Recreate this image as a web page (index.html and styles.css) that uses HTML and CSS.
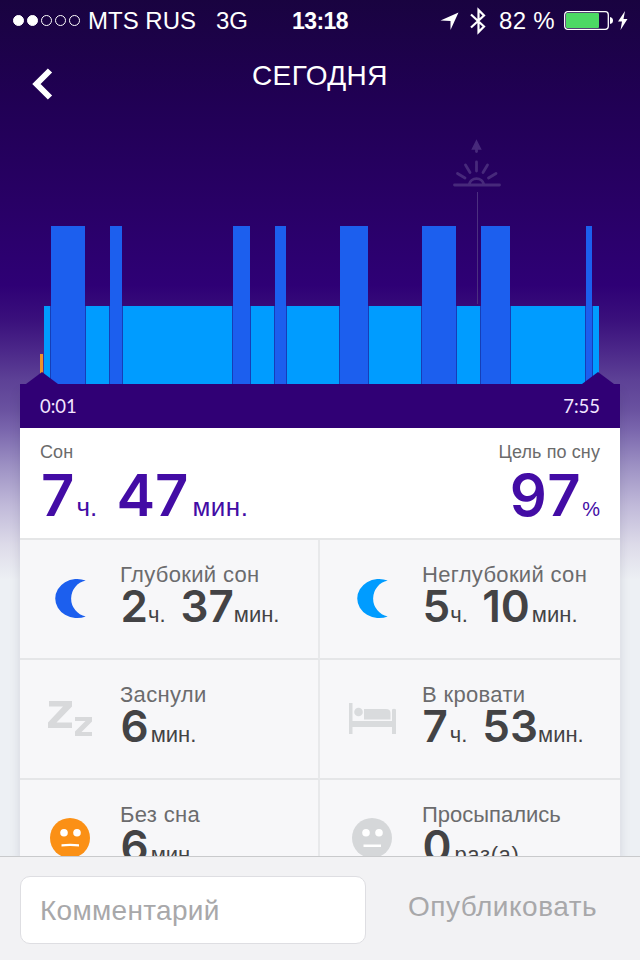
FILE: index.html
```html
<!DOCTYPE html>
<html lang="ru">
<head>
<meta charset="utf-8">
<title>Сегодня</title>
<link rel="stylesheet" href="styles.css">
</head>
<body>
<div class="app">
  <div class="status">
    <div class="signal"><i class="on"></i><i class="on"></i><i></i><i></i><i></i></div>
    <span class="carrier">MTS RUS</span>
    <span class="network">3G</span>
    <span class="clock">13:18</span>
    <svg class="location" width="19" height="19" viewBox="0 0 19 19"><path d="M18.5 0.5L10.5 18V9L0.5 8.5Z" fill="#fff"/></svg>
    <svg class="bluetooth" width="16" height="28" viewBox="0 0 16 28"><path d="M1 7.5L14 19.5L8.500 25V3L14 8.5L1 20.5" fill="none" stroke="#fff" stroke-width="2.200"/></svg>
    <span class="percent">82 %</span>
    <svg class="battery" width="64" height="20" viewBox="0 0 64 20">
      <rect x="0.7" y="0.7" width="43.6" height="17.6" rx="3" fill="none" stroke="#fff" stroke-width="1.3"/>
      <rect x="2" y="2" width="33" height="15" rx="1" fill="#4cd964"/>
      <path d="M46 6Q49 6.500 49 9.500T46 13Z" fill="#fff"/>
      <path d="M61 0L54 10.500H58L56.500 19L63.500 8H59.500Z" fill="#fff"/>
    </svg>
  </div>
  <header class="header">
    <svg class="back" width="24" height="34" viewBox="0 0 24 34"><path d="M20 3.500L6.500 17L20 30.500" fill="none" stroke="#fff" stroke-width="6"/></svg>
    <h1 class="title">СЕГОДНЯ</h1>
  </header>
  <section class="chart">
    <div class="sunrise">
      <svg width="48" height="50" viewBox="0 0 48 50" fill="none" stroke="#47297b" stroke-width="2.800" stroke-linecap="round">
        <path d="M23.500 3L27.500 11H19.500Z" fill="#47297b" stroke-width="1.500"/><path d="M23.500 10V13.500"/>
        <path d="M1.500 47H46.500M16 46.500A7.700 7.500 0 0 1 31 46.500M23.500 24V33M12.500 27L17 34.500M34.500 27L30 34.500M4.500 35.500L12 40M43 35.500L35.500 40"/>
      </svg>
      <div class="sunrise-line"></div>
    </div>
    <div class="bars">
      <i class="bar awake" style="width:3px"></i>
      <i class="bar light first" style="width:6px"></i>
      <i class="bar deep" style="width:34px"></i>
      <i class="bar light" style="width:23px"></i>
      <i class="bar deep" style="width:12px"></i>
      <i class="bar light" style="width:109px"></i>
      <i class="bar deep" style="width:17px"></i>
      <i class="bar light" style="width:23px"></i>
      <i class="bar deep" style="width:11px"></i>
      <i class="bar light" style="width:52px"></i>
      <i class="bar deep" style="width:28px"></i>
      <i class="bar light" style="width:52px"></i>
      <i class="bar deep" style="width:34px"></i>
      <i class="bar light" style="width:23px"></i>
      <i class="bar deep" style="width:29px"></i>
      <i class="bar light" style="width:74px"></i>
      <i class="bar deep" style="width:6px"></i>
      <i class="bar light last" style="width:6px"></i>
    </div>
  </section>
  <main class="card">
    <div class="times">
      <i class="notch start"></i><i class="notch end"></i>
      <span>0:01</span><span>7:55</span>
    </div>
    <section class="summary">
      <div>
        <div class="caption">Сон</div>
        <div class="total"><b class="first-number">7</b><span class="hours">ч.</span><b>47</b><span class="minutes">мин.</span></div>
      </div>
      <div class="goal">
        <div class="caption">Цель по сну</div>
        <div class="total"><b>97</b><span class="pct">%</span></div>
      </div>
    </section>
    <section class="grid">
      <article class="cell">
        <svg class="icon" width="50" height="50" viewBox="0 0 50 50"><path d="M40.700 7.500A22 19.500 0 1 0 40.700 43.500A18.400 18.400 0 0 1 40.700 7.500Z" fill="#1c5fee"/></svg>
        <div><div class="label">Глубокий сон</div><div class="value"><b>2</b><span class="hours">ч.</span><b>37</b><span>мин.</span></div></div>
      </article>
      <article class="cell">
        <svg class="icon" width="50" height="50" viewBox="0 0 50 50"><path d="M40.700 7.500A22 19.500 0 1 0 40.700 43.500A18.400 18.400 0 0 1 40.700 7.500Z" fill="#009cff"/></svg>
        <div><div class="label">Неглубокий сон</div><div class="value"><b>5</b><span class="hours">ч.</span><b class="ten">10</b><span class="gap">мин.</span></div></div>
      </article>
      <article class="cell">
        <svg class="icon" width="50" height="50" viewBox="0 0 50 50" fill="#d8d9db"><path d="M4 8H27V13.500L11.500 29.500H27V35H3V29.500L18 13.500H4ZM30 24H47V28.500L36.500 39H47V43H30V38.500L40.500 28H30Z"/></svg>
        <div><div class="label">Заснули</div><div class="value"><b>6</b><span class="gap">мин.</span></div></div>
      </article>
      <article class="cell">
        <svg class="icon" width="50" height="50" viewBox="0 0 50 50" fill="#d9dbdd"><path d="M2 10H5.500V28H45V16.500Q47 15 49 16.500V41H45V34H5.500V41H2Z"/><circle cx="11.500" cy="19" r="4.300"/><path d="M17 16H39Q43.500 16 43.500 20V26.500H17Z"/></svg>
        <div><div class="label">В кровати</div><div class="value"><b>7</b><span class="hours gap">ч.</span><b>53</b><span>мин.</span></div></div>
      </article>
      <article class="cell">
        <svg class="icon" width="50" height="50" viewBox="0 0 50 50"><circle cx="25" cy="25" r="20" fill="#fb9015"/><g fill="#fff"><circle cx="19" cy="19.800" r="3.800"/><circle cx="32" cy="19.800" r="3.800"/><path d="M16.500 31.300Q25 30.300 34 31.300V33.600Q25 32.600 16.500 33.600Z"/></g></svg>
        <div><div class="label">Без сна</div><div class="value"><b>6</b><span class="gap">мин.</span></div></div>
      </article>
      <article class="cell">
        <svg class="icon" width="50" height="50" viewBox="0 0 50 50"><circle cx="25" cy="25" r="20" fill="#d5d7d9"/><g fill="#fff"><circle cx="19" cy="19.800" r="3.800"/><circle cx="32" cy="19.800" r="3.800"/><path d="M16.500 31.500H34V34H16.500Z"/></g></svg>
        <div><div class="label tight">Просыпались</div><div class="value"><b>0</b><span class="times-unit">раз(а)</span></div></div>
      </article>
    </section>
  </main>
  <footer class="composer">
    <div class="field">Комментарий</div>
    <div class="publish">Опубликовать</div>
  </footer>
</div>
</body>
</html>
```
FILE: styles.css
```css
* { box-sizing: border-box; }
body { margin: 0; font-family: "Liberation Sans", sans-serif; }
h1 { margin: 0; font-weight: 400; }
svg { display: block; flex: none; }
.app {
  width: 640px; height: 960px; overflow: hidden;
  display: flex; flex-direction: column;
  background: linear-gradient(#190340 0, #200053 95px, #280065 200px, #2e0075 285px, #3a107c 320px, #4b2789 350px, #5d4196 380px, #6a52a0 410px, #7a66ad 430px, #9c90c3 465px, #c0b9d9 505px, #dddbe9 545px, #edf0f4 580px);
}
.status { height: 40px; display: flex; align-items: center; color: #fff; font-size: 24px; line-height: 40px; padding: 1px 0 0 13px; flex: none; white-space: nowrap; }
.signal { display: flex; gap: 3px; width: 75px; }
.signal i { width: 11px; height: 11px; border: 1px solid #fff; border-radius: 50%; }
.signal .on { background: #fff; }
.carrier { width: 128px; }
.network { width: 76px; }
.clock { width: 148px; font-weight: 700; font-size: 23px; letter-spacing: -0.6px; }
.location { margin-top: 1px; }
.bluetooth { margin-left: 11px; }
.percent { margin-left: 13px; width: 65px; letter-spacing: 0.3px; }
.header { height: 80px; padding-left: 30px; display: flex; flex: none; }
.back { margin-top: 27px; }
.title { color: #fff; font-size: 28px; line-height: 36px; margin: 18px 0 0 198px; letter-spacing: 0.4px; }
.chart { height: 264px; position: relative; flex: none; padding: 106px 0 0 40px; }
.sunrise { position: absolute; left: 453px; top: 18px; }
.sunrise-line { width: 1px; height: 112px; margin-left: 24px; margin-top: 4px; background: #4c2f80; }
.bars { display: flex; align-items: flex-end; gap: 1px; height: 158px; position: relative; }
.bar { flex: none; }
.awake { height: 30px; background: #ee922d; }
.light { height: 78px; background: #009cff; box-shadow: 1px 0 #163eb8, -1px 0 #163eb8; }
.first { box-shadow: 1px 0 #163eb8; }
.last { box-shadow: -1px 0 #163eb8; }
.deep { height: 158px; background: #1c5fee; }
.card { width: 600px; height: 472px; margin: 0 20px; flex: none; box-shadow: 0 8px 10px rgba(40, 40, 70, .13); }
.times { height: 44px; position: relative; background: #300075; color: #f2e6ff; display: flex; justify-content: space-between; padding: 0 20px; font: 18.5px/44px Lato, sans-serif; }
.notch { position: absolute; top: -12px; width: 32px; height: 12px; background: #300075; clip-path: polygon(50% 0, 100% 100%, 0 100%); }
.start { left: 6px; }
.end { right: 6px; }
.summary { height: 112px; background: #fff; border-bottom: 2px solid #e5e6e7; display: flex; justify-content: space-between; padding: 12px 20px 0; }
.caption { font-size: 18px; line-height: 24px; color: #6b6b6b; letter-spacing: 0.1px; }
.goal { text-align: right; }
.total { display: flex; align-items: baseline; color: #430ca5; font-size: 26px; line-height: 62px; }
.total b { font: 600 58px/62px Inter, sans-serif; }
.total .first-number { margin-left: 1px; }
.total .hours { width: 40px; margin-left: 2px; }
.total .minutes { margin-left: 4px; letter-spacing: 0.5px; }
.goal .total { justify-content: flex-end; }
.goal b { letter-spacing: 1.5px; }
.pct { font-size: 20px; }
.grid { display: grid; grid-template-columns: 300px 300px; grid-auto-rows: 120px; height: 316px; overflow: hidden; }
.cell { display: flex; background: #f7f7f9; border-bottom: 2px solid #e5e6e8; padding: 21px 0 0 25px; }
.cell:nth-child(odd) { border-right: 2px solid #e8e9eb; }
.cell:nth-child(even) { padding-left: 27px; }
.icon { margin: 12px 25px 0 0; }
.label { font-size: 22px; line-height: 28px; color: #6b6b6d; white-space: nowrap; letter-spacing: 0.33px; }
.tight { letter-spacing: 0; }
.value { display: flex; align-items: baseline; color: #434345; font-size: 22px; line-height: 35px; }
.value b { font: 600 44px/35px Inter, sans-serif; margin-left: 0.5px; }
.value .hours { width: 32px; }
.value .ten { margin-left: 0; }
.value .gap { margin-left: 2px; }
.times-unit { margin-left: 3px; letter-spacing: 0.6px; }
.composer { height: 104px; position: relative; background: #f2f2f4; border-top: 1px solid #c9cacc; display: flex; padding: 19px 0 0 20px; color: #a8a8aa; font-size: 28px; flex: none; }
.field { width: 346px; height: 68px; border: 1px solid #dedee2; border-radius: 10px; background: #fff; padding-left: 19px; line-height: 68px; letter-spacing: 0.3px; }
.publish { margin-left: 42px; line-height: 61px; letter-spacing: 0.5px; }
```
